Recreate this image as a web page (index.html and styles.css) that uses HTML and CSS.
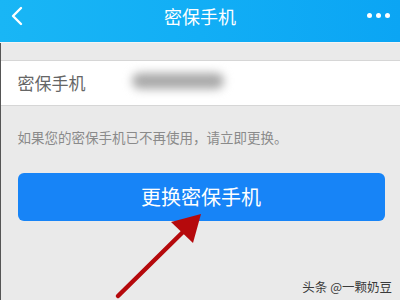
FILE: index.html
```html
<!DOCTYPE html>
<html>
<head>
<meta charset="utf-8">
<link rel="stylesheet" href="styles.css">
</head>
<body>
<div class="page">
  <header class="bar">
    <svg class="back" width="14" height="20" viewBox="0 0 14 20"><path d="M11 2 L3 10 L11 18" fill="none" stroke="#fff" stroke-width="2.4" stroke-linecap="round" stroke-linejoin="round"/></svg>
    <div class="title">密保手机</div>
    <div class="more"><span></span><span></span><span></span></div>
  </header>
  <main class="content">
    <div class="row">
      <span class="label">密保手机</span>
      <span class="blur"></span>
    </div>
    <p class="hint">如果您的密保手机已不再使用，请立即更换。</p>
    <button class="btn">更换密保手机</button>
  </main>
  <svg class="arrow" width="400" height="300" viewBox="0 0 400 300">
    <line x1="118" y1="296" x2="186" y2="229" stroke="#b5090c" stroke-width="4.5" stroke-linecap="round"/>
    <polygon points="201,214 171,222 193,243" fill="#b5090c"/>
  </svg>
  <div class="mark">头条 @一颗奶豆</div>
</div>
</body>
</html>
```
FILE: styles.css
```css
html, body {
  margin: 0;
  padding: 0;
}
body {
  width: 400px;
  height: 300px;
  overflow: hidden;
  font-family: "Noto Sans CJK SC", "Noto Sans", sans-serif;
}
.page {
  position: relative;
  width: 400px;
  height: 300px;
  background: #eaeaea;
}
.bar {
  height: 42px;
  background: linear-gradient(90deg, #19b6f5 0%, #12aef5 50%, #0ba5f4 100%);
  display: flex;
  align-items: center;
  position: relative;
  border-bottom: 1px solid #f4f4f4;
}
.back {
  margin-left: 10px;
  margin-top: -10px;
}
.title {
  position: absolute;
  left: 0;
  right: 0;
  top: 4px;
  text-align: center;
  color: #fff;
  font-size: 18px;
  line-height: 24px;
}
.more {
  margin-left: auto;
  margin-right: 10px;
  margin-top: -12px;
  display: flex;
  gap: 4px;
}
.more span {
  width: 5px;
  height: 5px;
  border-radius: 50%;
  background: #fff;
}
.content {
  border-left: 1.5px solid #555;
  height: 257px;
  padding-top: 17px;
  box-sizing: border-box;
}
.row {
  height: 44px;
  background: #fff;
  border-top: 1px solid #d6d6d6;
  border-bottom: 1px solid #d6d6d6;
  display: flex;
  align-items: center;
  padding-left: 16.5px;
}
.label {
  font-size: 17px;
  color: #666;
  line-height: 24px;
}
.blur {
  width: 92px;
  height: 16px;
  margin-left: 46px;
  margin-top: -4px;
  background: #a9a9a9;
  border-radius: 9px;
  filter: blur(5px);
}
.hint {
  margin: 21px 0 0 16.5px;
  font-size: 13.5px;
  line-height: 20px;
  color: #8a8a8a;
}
.btn {
  display: block;
  margin: 26px 0 0 16.5px;
  width: 367px;
  height: 48px;
  border: none;
  border-radius: 6px;
  background: #1784f7;
  color: #fff;
  font-family: inherit;
  font-size: 20px;
  padding: 0 0 2px 0;
}
.arrow {
  position: absolute;
  left: 0;
  top: 0;
  pointer-events: none;
}
.mark {
  position: absolute;
  right: 8px;
  top: 278px;
  font-size: 12.5px;
  line-height: 18px;
  color: #3a3a3a;
}
```
